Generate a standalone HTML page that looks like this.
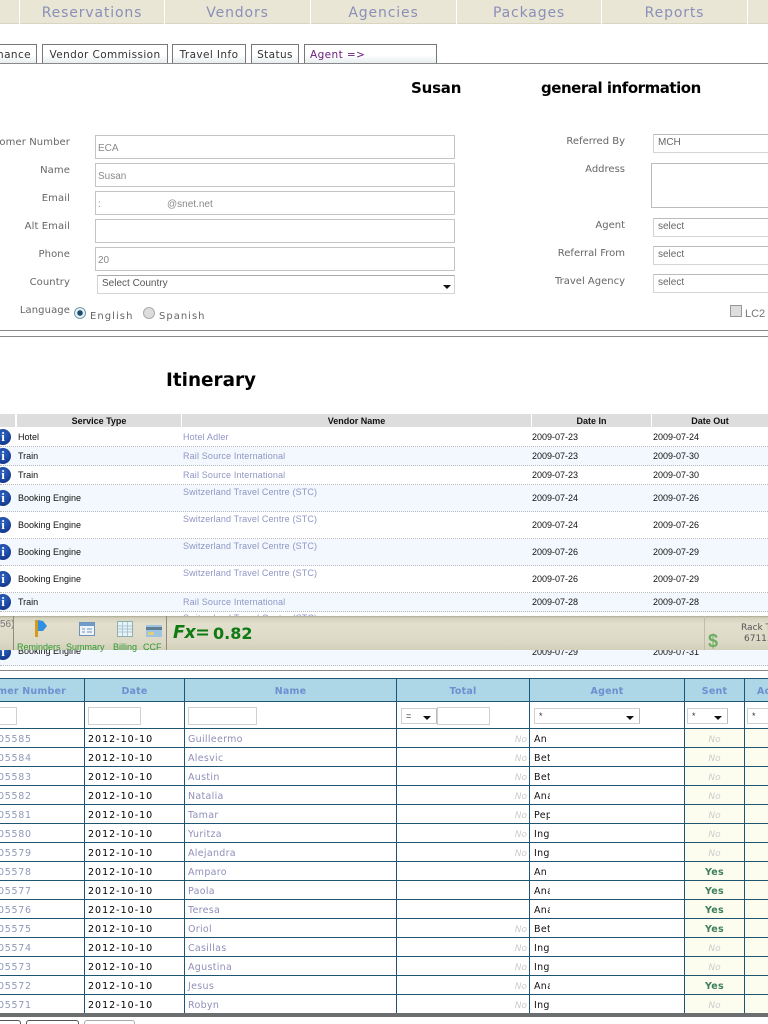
<!DOCTYPE html>
<html lang="en"><head><meta charset="utf-8"><title>Itinerary</title>
<style>
html,body{margin:0;padding:0;background:#fff;overflow:hidden;width:768px;height:1024px}
body{font-family:"DejaVu Sans","Liberation Sans",sans-serif}
#w{position:absolute;left:0;top:0;width:768px;height:1024px;overflow:hidden;background:#fff}
.a{position:absolute;white-space:nowrap}
.nav{position:absolute;top:0;height:23px;background:#e9e6d5;border-bottom:1px solid #d8d5c2;color:#8a8fb8;font-size:14px;letter-spacing:.85px;line-height:26px;text-align:center;box-sizing:content-box}
.tab{position:absolute;top:44px;height:18px;border:1px solid #777;border-bottom:none;box-sizing:content-box;background:linear-gradient(#fff 55%,#e6edf0);font-size:10.5px;line-height:20px;color:#333;text-align:center;letter-spacing:.4px}
.hr{position:absolute;left:0;width:768px;height:1px;background:#888}
.lb{position:absolute;right:0;font-size:10px;color:#666;white-space:nowrap;letter-spacing:.1px}
.lr .lb{letter-spacing:0}
.in{position:absolute;left:95px;width:360px;height:24px;box-sizing:border-box;border:1px solid #c4c4c4;font:10px/25px "Liberation Sans",sans-serif;color:#8a8a8a;padding-left:2px}
.sel{position:absolute;left:653px;width:130px;height:19px;box-sizing:border-box;border:1px solid #d4d4d4;border-top-color:#bbb;font:10px/16px "Liberation Sans",sans-serif;color:#666;padding-left:4px}
h2{position:absolute;margin:0;font:bold 15px "DejaVu Sans",sans-serif;color:#000;white-space:nowrap}
.ih{position:absolute;top:414px;height:13px;background:#ddd;font:bold 9px/14px "Liberation Sans",sans-serif;text-align:center;color:#111}
.ir{position:absolute;left:0;width:768px;box-sizing:border-box;border-bottom:1px dotted #bbb}
.ir.b{background:#f2f8fd}
.ir span{position:absolute;font:9px/11px "Liberation Sans",sans-serif;color:#111;white-space:nowrap}
.ir .s{left:18px}.ir .v{left:183px;color:#8f96c4;letter-spacing:.15px}.ir .d1{left:532px}.ir .d2{left:653px}
.ir i{position:absolute;left:-5px;width:16px;height:16px;border-radius:50%;background:radial-gradient(circle at 50% 35%,#2f66c4,#0a2a7e);color:#fff;font:bold 13px/16px "Liberation Serif",serif;text-align:center}
table{position:absolute;left:-50px;top:678px;border-collapse:collapse;table-layout:fixed;width:895px}
td,th{border:1px solid #1d5573;padding:0;overflow:hidden;white-space:nowrap;box-sizing:border-box}
th{height:23px;background:#add6e6;color:#6f8fd0;font:bold 9.5px "DejaVu Sans",sans-serif;letter-spacing:.2px;padding-top:2px}
tr.f td{height:27px;position:relative}
tr.r td{height:19px;font-size:9.5px;letter-spacing:.7px;line-height:14px;padding-top:4px}
.fi{position:absolute;top:5px;height:18px;box-sizing:border-box;border:1px solid #d0d0d0;background:#fff}
.fs{position:absolute;top:6px;height:16px;box-sizing:border-box;border:1px solid #d0d0d0;border-right-color:#bbb;background:#fff;font:9px/14px "Liberation Sans",sans-serif;padding-left:4px;color:#333}
.fs:after{content:"";position:absolute;right:5px;top:7px;border:4px solid transparent;border-top:4px solid #111;border-bottom:none}
tr.r td.n{color:#8f98b8;padding-left:47px}
tr.r td.d{color:#000;padding-left:3px;letter-spacing:1px}
tr.r td.m{color:#8f8fb8;padding-left:3px;letter-spacing:.3px}
tr.r td.t{text-align:right;padding-right:2px;color:#ccc;font:italic 9px/14px "DejaVu Sans",sans-serif;letter-spacing:0}
tr.r td.g{padding-left:4px;color:#111;letter-spacing:.3px}
td.g span{display:inline-block;width:16px;overflow:hidden;vertical-align:top}
tr.r td.y{background:#fdfdef;text-align:center;color:#ccc;font:italic 9px/14px "DejaVu Sans",sans-serif;letter-spacing:0}
tr.r td.y.k{color:#3d7f5c;font:bold 9.5px/14px "DejaVu Sans",sans-serif;letter-spacing:.3px;padding-top:3px}
td.z{background:#fdfdef}
.bar{position:absolute;left:0;top:616px;width:768px;height:34px;background:linear-gradient(#a9a691 0,#d5d2bd 2px,#e2dfcd 8px,#dcd9c6 26px,#d2cfba);}
.bl{position:absolute;top:25px;font:9px/12px "Liberation Sans",sans-serif;color:#2f9a2f;white-space:nowrap}
</style></head><body><div id="w">

<div class="nav" style="left:0;width:19px"></div>
<div class="nav" style="left:20px;width:144px">Reservations</div>
<div class="nav" style="left:165px;width:145px">Vendors</div>
<div class="nav" style="left:311px;width:145px">Agencies</div>
<div class="nav" style="left:457px;width:144px">Packages</div>
<div class="nav" style="left:602px;width:145px">Reports</div>
<div class="nav" style="left:748px;width:20px"></div>

<div class="tab" style="left:-10px;width:45px;text-align:right"><span style="margin-right:5px">nance</span></div>
<div class="tab" style="left:42px;width:124px">Vendor Commission</div>
<div class="tab" style="left:172px;width:72px">Travel Info</div>
<div class="tab" style="left:251px;width:46px">Status</div>
<div class="tab" style="left:304px;width:131px;text-align:left;color:#6a1b7a"><span style="margin-left:5px">Agent =&gt;</span></div>
<div class="hr" style="top:63px"></div>

<h2 style="left:411px;top:79px;letter-spacing:-.2px">Susan</h2>
<h2 style="left:541px;top:79px;letter-spacing:-.47px">general information</h2>

<div class="a" style="left:0;top:0;width:70px;height:320px">
<div class="lb" style="top:137px">Customer Number</div>
<div class="lb" style="top:165px">Name</div>
<div class="lb" style="top:193px">Email</div>
<div class="lb" style="top:221px">Alt Email</div>
<div class="lb" style="top:249px">Phone</div>
<div class="lb" style="top:277px">Country</div>
<div class="lb" style="top:305px">Language</div>
</div>
<div class="in" style="top:135px">ECA</div>
<div class="in" style="top:163px">Susan</div>
<div class="in" style="top:191px">:<span style="position:absolute;left:71px">@snet.net</span></div>
<div class="in" style="top:219px"></div>
<div class="in" style="top:247px">20</div>
<div class="in" style="left:97px;width:358px;top:275px;height:19px;border-color:#d4d4d4;border-top-color:#aaa;line-height:15px;padding-left:4px;color:#555">Select Country<span style="position:absolute;right:3px;top:9px;border:4px solid transparent;border-top:4px solid #111;border-bottom:none"></span></div>

<span class="a" style="left:74px;top:307px;width:12px;height:12px;border:1px solid #7a99b0;border-radius:50%;box-sizing:border-box;background:radial-gradient(circle,#16506e 0 2.5px,#e8eff5 3px)"></span>
<span class="a" style="left:90px;top:311px;font-size:10px;letter-spacing:1.05px;color:#666">English</span>
<span class="a" style="left:143px;top:307px;width:12px;height:12px;border:1px solid #aaa;border-radius:50%;box-sizing:border-box;background:#ddd"></span>
<span class="a" style="left:159px;top:311px;font-size:10px;letter-spacing:1px;color:#666">Spanish</span>

<div class="a lr" style="left:500px;top:0;width:125px;height:320px">
<div class="lb" style="top:136px">Referred By</div>
<div class="lb" style="top:164px">Address</div>
<div class="lb" style="top:220px">Agent</div>
<div class="lb" style="top:248px">Referral From</div>
<div class="lb" style="top:276px">Travel Agency</div>
</div>
<div class="sel" style="top:134px;line-height:15px">MCH</div>
<div class="a" style="left:651px;top:163px;width:130px;height:45px;box-sizing:border-box;border:1px solid #bbb"></div>
<div class="sel" style="top:218px">select</div>
<div class="sel" style="top:246px">select</div>
<div class="sel" style="top:274px">select</div>
<span class="a" style="left:730px;top:305px;width:12px;height:12px;box-sizing:border-box;border:1px solid #999;background:#ddd"></span>
<span class="a" style="left:745px;top:308px;font:11px 'Liberation Sans',sans-serif;color:#777">LC2</span>

<div class="hr" style="top:330px"></div>
<div class="hr" style="top:336px"></div>

<h2 style="left:166px;top:370px;font-size:18.4px">Itinerary</h2>

<div class="ih" style="left:0;width:15px"></div>
<div class="ih" style="left:17px;width:164px">Service Type</div>
<div class="ih" style="left:182px;width:349px">Vendor Name</div>
<div class="ih" style="left:532px;width:119px">Date In</div>
<div class="ih" style="left:652px;width:116px">Date Out</div>

<div class="ir" style="top:428px;height:19px"><i style="top:1px">i</i><span class="s" style="top:4px">Hotel</span><span class="v" style="top:4px">Hotel Adler</span><span class="d1" style="top:4px">2009-07-23</span><span class="d2" style="top:4px">2009-07-24</span></div>
<div class="ir b" style="top:447px;height:19px"><i style="top:1px">i</i><span class="s" style="top:4px">Train</span><span class="v" style="top:4px">Rail Source International</span><span class="d1" style="top:4px">2009-07-23</span><span class="d2" style="top:4px">2009-07-30</span></div>
<div class="ir" style="top:466px;height:19px"><i style="top:1px">i</i><span class="s" style="top:4px">Train</span><span class="v" style="top:4px">Rail Source International</span><span class="d1" style="top:4px">2009-07-23</span><span class="d2" style="top:4px">2009-07-30</span></div>
<div class="ir b" style="top:485px;height:27px"><i style="top:5px">i</i><span class="s" style="top:8px">Booking Engine</span><span class="v" style="top:2px">Switzerland Travel Centre (STC)</span><span class="d1" style="top:8px">2009-07-24</span><span class="d2" style="top:8px">2009-07-26</span></div>
<div class="ir" style="top:512px;height:27px"><i style="top:5px">i</i><span class="s" style="top:8px">Booking Engine</span><span class="v" style="top:2px">Switzerland Travel Centre (STC)</span><span class="d1" style="top:8px">2009-07-24</span><span class="d2" style="top:8px">2009-07-26</span></div>
<div class="ir b" style="top:539px;height:27px"><i style="top:5px">i</i><span class="s" style="top:8px">Booking Engine</span><span class="v" style="top:2px">Switzerland Travel Centre (STC)</span><span class="d1" style="top:8px">2009-07-26</span><span class="d2" style="top:8px">2009-07-29</span></div>
<div class="ir" style="top:566px;height:27px"><i style="top:5px">i</i><span class="s" style="top:8px">Booking Engine</span><span class="v" style="top:2px">Switzerland Travel Centre (STC)</span><span class="d1" style="top:8px">2009-07-26</span><span class="d2" style="top:8px">2009-07-29</span></div>
<div class="ir b" style="top:593px;height:19px"><i style="top:1px">i</i><span class="s" style="top:4px">Train</span><span class="v" style="top:4px">Rail Source International</span><span class="d1" style="top:4px">2009-07-28</span><span class="d2" style="top:4px">2009-07-28</span></div>
<div class="ir" style="top:612px;height:28px;border-bottom:none"><span class="v" style="top:1px">Switzerland Travel Centre (STC)</span></div>
<div class="ir b" style="top:640px;height:26px"><i style="top:4px">i</i><span class="s" style="top:6px">Booking Engine</span><span class="d1" style="top:7px">2009-07-29</span><span class="d2" style="top:7px">2009-07-31</span></div>

<div class="bar">
<span class="a" style="left:0;top:3px;font:10px 'Liberation Sans',sans-serif;color:#777">56)</span>
<div class="a" style="left:13px;top:0;width:1px;height:34px;background:#8f8c78"></div>
<svg class="a" style="left:34px;top:3px" width="15" height="19" viewBox="0 0 15 19"><rect x="1" y="1" width="3" height="17" fill="#d39a1f"/><path d="M4 1 L9 2 L13 7 L9 12 L4 12Z" fill="#2f8fe0"/></svg>
<svg class="a" style="left:79px;top:6px" width="16" height="14" viewBox="0 0 16 14"><rect x=".5" y=".5" width="15" height="13" fill="#eef4fa" stroke="#6f93b8"/><rect x="1" y="1" width="14" height="3" fill="#6f9ccb"/><path d="M3 7h3M8 7h5M3 10h3M8 10h5" stroke="#6f93b8"/></svg>
<svg class="a" style="left:117px;top:5px" width="16" height="16" viewBox="0 0 16 16"><rect x=".5" y=".5" width="15" height="15" fill="#eaf3f3" stroke="#8fb0b0"/><path d="M1 5h14M1 8h14M1 11h14M5.500 1v14M10.500 1v14" stroke="#a9c6d6"/></svg>
<svg class="a" style="left:146px;top:8px" width="16" height="14" viewBox="0 0 16 14"><rect y="1" width="16" height="12" fill="#9fc3e0"/><rect y="3" width="16" height="3" fill="#5f7f95"/><rect x="2" y="8" width="6" height="3" fill="#d9d27a"/></svg>
<span class="bl" style="left:17px">Reminders</span>
<span class="bl" style="left:66px">Summary</span>
<span class="bl" style="left:113px">Billing</span>
<span class="bl" style="left:143px">CCF</span>
<div class="a" style="left:166px;top:0;width:1px;height:34px;background:#8f8c78"></div>
<span class="a" style="left:173px;top:7px;font:italic bold 17.500px 'DejaVu Sans',sans-serif;letter-spacing:-.5px;color:#0f7a12">Fx=</span>
<span class="a" style="left:213px;top:8px;font:bold 16px 'DejaVu Sans',sans-serif;color:#0f7a12">0.82</span>
<div class="a" style="left:704px;top:0;width:1px;height:34px;background:#c0bda8"></div>
<span class="a" style="left:708px;top:15px;font:bold 18px 'Liberation Sans',sans-serif;color:#6cae63">$</span>
<span class="a" style="left:741px;top:7px;font:9px 'DejaVu Sans',sans-serif;color:#555">Rack T</span>
<span class="a" style="left:744px;top:18px;font:9px 'DejaVu Sans',sans-serif;color:#555">6711.</span>
</div>

<div class="hr" style="top:670px"></div>

<table>
<colgroup><col style="width:134px"><col style="width:100px"><col style="width:212px"><col style="width:133px"><col style="width:155px"><col style="width:60px"><col style="width:101px"></colgroup>
<tr><th style="text-align:right;padding-right:18px">Customer Number</th><th>Date</th><th>Name</th><th>Total</th><th>Agent</th><th>Sent</th><th style="text-align:left;padding-left:12px">Ac</th></tr>
<tr class="f"><td><div class="fi" style="left:40px;width:26px"></div></td><td><div class="fi" style="left:3px;width:53px"></div></td><td><div class="fi" style="left:3px;width:69px"></div></td><td><div class="fs" style="left:4px;width:36px">=</div><div class="fi" style="left:40px;width:53px"></div></td><td><div class="fs" style="left:4px;width:106px">*</div></td><td><div class="fs" style="left:2px;width:41px">*</div></td><td><div class="fs" style="left:2px;width:60px">*</div></td></tr>
<tr class="r"><td class="n">05585</td><td class="d">2012-10-10</td><td class="m">Guilleermo</td><td class="t">No</td><td class="g"><span>An</span></td><td class="y">No</td><td class="z"></td></tr>
<tr class="r"><td class="n">05584</td><td class="d">2012-10-10</td><td class="m">Alesvic</td><td class="t">No</td><td class="g"><span>Bet</span></td><td class="y">No</td><td class="z"></td></tr>
<tr class="r"><td class="n">05583</td><td class="d">2012-10-10</td><td class="m">Austin</td><td class="t">No</td><td class="g"><span>Bet</span></td><td class="y">No</td><td class="z"></td></tr>
<tr class="r"><td class="n">05582</td><td class="d">2012-10-10</td><td class="m">Natalia</td><td class="t">No</td><td class="g"><span>Ana</span></td><td class="y">No</td><td class="z"></td></tr>
<tr class="r"><td class="n">05581</td><td class="d">2012-10-10</td><td class="m">Tamar</td><td class="t">No</td><td class="g"><span>Pep</span></td><td class="y">No</td><td class="z"></td></tr>
<tr class="r"><td class="n">05580</td><td class="d">2012-10-10</td><td class="m">Yuritza</td><td class="t">No</td><td class="g"><span>Ing</span></td><td class="y">No</td><td class="z"></td></tr>
<tr class="r"><td class="n">05579</td><td class="d">2012-10-10</td><td class="m">Alejandra</td><td class="t">No</td><td class="g"><span>Ing</span></td><td class="y">No</td><td class="z"></td></tr>
<tr class="r"><td class="n">05578</td><td class="d">2012-10-10</td><td class="m">Amparo</td><td class="t"></td><td class="g"><span>An</span></td><td class="y k">Yes</td><td class="z"></td></tr>
<tr class="r"><td class="n">05577</td><td class="d">2012-10-10</td><td class="m">Paola</td><td class="t"></td><td class="g"><span>Ana</span></td><td class="y k">Yes</td><td class="z"></td></tr>
<tr class="r"><td class="n">05576</td><td class="d">2012-10-10</td><td class="m">Teresa</td><td class="t"></td><td class="g"><span>Ana</span></td><td class="y k">Yes</td><td class="z"></td></tr>
<tr class="r"><td class="n">05575</td><td class="d">2012-10-10</td><td class="m">Oriol</td><td class="t">No</td><td class="g"><span>Bet</span></td><td class="y k">Yes</td><td class="z"></td></tr>
<tr class="r"><td class="n">05574</td><td class="d">2012-10-10</td><td class="m">Casillas</td><td class="t">No</td><td class="g"><span>Ing</span></td><td class="y">No</td><td class="z"></td></tr>
<tr class="r"><td class="n">05573</td><td class="d">2012-10-10</td><td class="m">Agustina</td><td class="t">No</td><td class="g"><span>Ing</span></td><td class="y">No</td><td class="z"></td></tr>
<tr class="r"><td class="n">05572</td><td class="d">2012-10-10</td><td class="m">Jesus</td><td class="t">No</td><td class="g"><span>Ana</span></td><td class="y k">Yes</td><td class="z"></td></tr>
<tr class="r"><td class="n">05571</td><td class="d">2012-10-10</td><td class="m">Robyn</td><td class="t">No</td><td class="g"><span>Ing</span></td><td class="y">No</td><td class="z"></td></tr>
</table>

<div class="a" style="left:0;top:1013px;width:768px;height:4px;background:#6b6f70"></div>
<div class="a" style="left:-10px;top:1020px;width:31px;height:4px;border:1px solid #555;border-bottom:none;border-radius:3px 3px 0 0;box-sizing:border-box"></div>
<div class="a" style="left:26px;top:1020px;width:53px;height:4px;border:1px solid #555;border-bottom:none;border-radius:3px 3px 0 0;box-sizing:border-box"></div>
<div class="a" style="left:84px;top:1020px;width:51px;height:4px;border:1px solid #aaa;border-bottom:none;border-radius:3px 3px 0 0;box-sizing:border-box"></div>
</div></body></html>
